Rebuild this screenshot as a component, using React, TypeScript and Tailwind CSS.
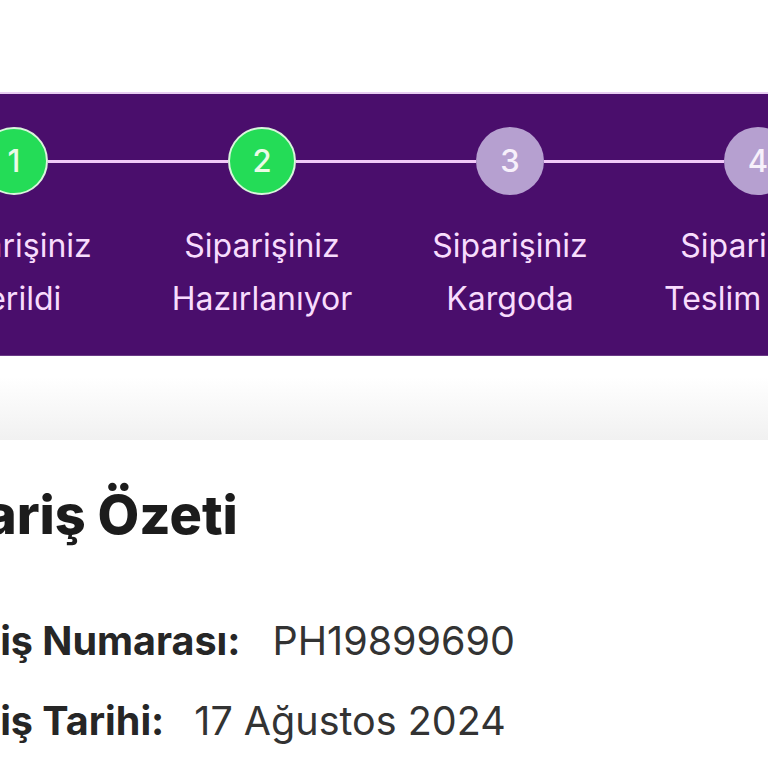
import React from "react";

const steps = [
  { n: "1", a: "Siparişiniz", b: "Verildi", done: true },
  { n: "2", a: "Siparişiniz", b: "Hazırlanıyor", done: true },
  { n: "3", a: "Siparişiniz", b: "Kargoda", done: false },
  { n: "4", a: "Siparişiniz", b: "Teslim Edildi", done: false },
];

function Step({ step, index }: { step: (typeof steps)[number]; index: number }) {
  return (
    <div className="flex w-[248px] shrink-0 flex-col items-center">
      <div className="flex w-full items-center">
        <div className={`h-[3px] flex-1 ${index > 0 ? "bg-[#f1c9f7]" : "bg-transparent"}`} />
        <div
          className={`flex h-[68px] w-[68px] items-center justify-center rounded-full text-[31px] font-medium ${
            step.done
              ? "border-2 border-[#d9f5dc] bg-[#24dc57] text-[#eafbe6]"
              : "bg-[#b6a0d0] text-[#f7f0fb]"
          }`}
        >
          {step.n}
        </div>
        <div className={`h-[3px] flex-1 ${index < steps.length - 1 ? "bg-[#f1c9f7]" : "bg-transparent"}`} />
      </div>
      <div className="mt-[24px] text-center text-[32px] leading-[53px] text-[#f8dcfd] whitespace-nowrap">
        <div>{step.a}</div>
        <div>{step.b}</div>
      </div>
    </div>
  );
}

export default function App() {
  return (
    <div className="h-[768px] w-[768px] overflow-hidden bg-white font-['Inter',sans-serif]">
      <div className="h-[92px] bg-white" />

      <div className="h-[264px] border-t-2 border-b border-t-[#e8cdf2] border-b-[#6a3a86] bg-[#4a0e6c] pt-[33px]">
        <div className="-ml-[110px] flex">
          {steps.map((s, i) => (
            <Step key={s.n} step={s} index={i} />
          ))}
        </div>
      </div>

      <div className="h-[84px] bg-gradient-to-b from-white from-25% to-[#f1f1f1]" />

      <div className="-ml-[101px] text-[#1c1c1c]">
        <h2 className="mt-[48px] text-[54px] font-extrabold leading-none whitespace-nowrap">Sipariş Özeti</h2>
        <div className="mt-[78px] space-y-[38px] text-[39.5px] leading-[42px] whitespace-nowrap">
          <p>
            <span className="font-bold text-[#262626]">Sipariş Numarası:</span>
            <span className="ml-[32px] text-[#333]">PH19899690</span>
          </p>
          <p>
            <span className="font-bold text-[#262626]">Sipariş Tarihi:</span>
            <span className="ml-[30px] text-[#333]">17 Ağustos 2024</span>
          </p>
        </div>
      </div>
    </div>
  );
}
